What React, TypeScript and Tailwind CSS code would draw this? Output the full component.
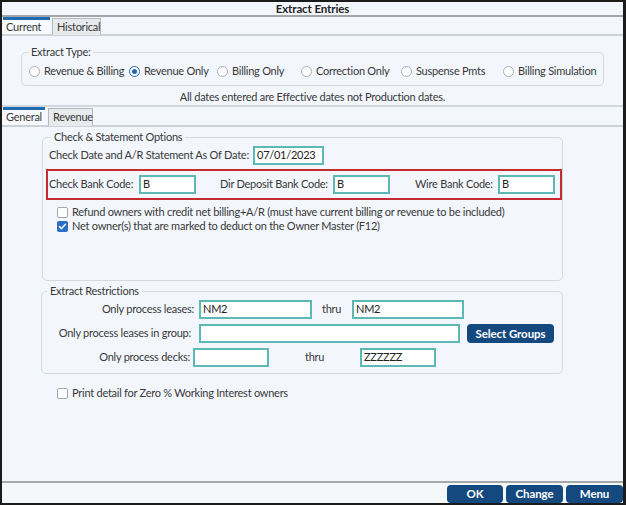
import React from 'react';

const FONT = { fontFamily: 'Lato, "Liberation Sans", sans-serif' };

function Radio({ label, checked, width }: { label: string; checked?: boolean; width?: string }) {
  return (
    <div className={`flex items-center gap-[4px] shrink-0 ${width ?? ''}`}>
      {checked ? (
        <span className="w-[11px] h-[11px] rounded-full border-[1.5px] border-[#2466ad] bg-white flex items-center justify-center">
          <span className="w-[5px] h-[5px] rounded-full bg-[#2466ad]" />
        </span>
      ) : (
        <span className="w-[11px] h-[11px] rounded-full border border-[#a9aeb3] bg-white" />
      )}
      <span>{label}</span>
    </div>
  );
}

function Check({ label, checked }: { label: string; checked?: boolean }) {
  return (
    <div className="flex items-center gap-[4px] h-[14px]">
      {checked ? (
        <span className="w-[11px] h-[11px] rounded-[2px] bg-[#2b6fc1] flex items-center justify-center">
          <svg width="9" height="9" viewBox="0 0 9 9" fill="none">
            <path d="M1.5 4.6l2 2 4-4.4" stroke="#fff" strokeWidth="1.5" strokeLinecap="round" strokeLinejoin="round" />
          </svg>
        </span>
      ) : (
        <span className="w-[11px] h-[11px] rounded-[2px] border border-[#a3a8ad] bg-white" />
      )}
      <span>{label}</span>
    </div>
  );
}

function Field({ value, w }: { value?: string; w: string }) {
  return (
    <div className={`h-[19px] border-2 border-[#5db9b5] bg-white flex items-center pl-[2px] text-[#222] shrink-0 ${w}`}>
      {value}
    </div>
  );
}

function Tab({ label, active, w }: { label: string; active?: boolean; w: string }) {
  return active ? (
    <div className={`h-full border-t-[3px] border-[#1f6cb3] bg-[#f7f9fc] flex items-center px-[3px] ${w}`}>{label}</div>
  ) : (
    <div className={`h-full mt-[1px] border border-b-0 border-[#b4b9be] bg-[#e8ebee] flex items-center px-[4px] ${w}`}>{label}</div>
  );
}

function BlueButton({ label, w }: { label: string; w: string }) {
  return (
    <button className={`h-[18px] rounded-[4px] bg-[#14497f] text-white font-bold text-[11.5px] tracking-[-0.1px] flex items-center justify-center ${w}`}>
      {label}
    </button>
  );
}

export default function App() {
  return (
    <div
      className="w-[626px] h-[505px] border-2 border-r-[3px] border-[#1b1b1b] bg-[#f3f7fd] text-[11px] tracking-[-0.25px] text-[#383838] whitespace-nowrap flex flex-col"
      style={FONT}
    >
      {/* title */}
      <div className="h-[15px] border-b-2 border-[#a3a6a8] flex items-center justify-center font-bold text-[11.5px] tracking-[-0.1px] text-[#222] leading-[13px]">
        Extract Entries
      </div>

      {/* top tabs */}
      <div className="h-[19px] border-b-2 border-[#cdd2d6] flex items-stretch pl-[1px] gap-[2px]">
        <Tab label="Current" active w="w-[47px]" />
        <Tab label="Historical" w="w-[49px]" />
      </div>

      {/* extract type */}
      <fieldset className="mt-[9px] ml-[19px] w-[581px] h-[41px] border border-[#d4dae0] rounded-[5px] px-[7px]">
        <legend className="px-[2px] ml-[0px] leading-[14px]">Extract Type:</legend>
        <div className="flex items-center h-[14px] mt-[5px]">
          <Radio label="Revenue & Billing" width="w-[100px]" />
          <Radio label="Revenue Only" checked width="w-[88px]" />
          <Radio label="Billing Only" width="w-[84px]" />
          <Radio label="Correction Only" width="w-[100px]" />
          <Radio label="Suspense Pmts" width="w-[102px]" />
          <Radio label="Billing Simulation" />
        </div>
      </fieldset>

      <div className="mt-[4px] h-[14px] leading-[14px] text-center">
        All dates entered are Effective dates not Production dates.
      </div>

      {/* sub tabs */}
      <div className="mt-[1px] border-t-2 border-[#d3d8dc] h-[18px] border-b-2 border-b-[#cdd2d6] flex items-stretch pl-[1px] gap-[3px] box-content">
        <Tab label="General" active w="w-[42px]" />
        <Tab label="Revenue" w="w-[45px]" />
      </div>

      {/* check & statement */}
      <fieldset className="mt-[3px] ml-[40px] w-[521px] h-[151px] border border-[#d4dae0] rounded-[5px]">
        <legend className="px-[3px] ml-[8px] leading-[14px]">Check &amp; Statement Options</legend>
        <div className="flex items-center h-[19px] mt-[2px] pl-[6px]">
          <span className="w-[204px] shrink-0">Check Date and A/R Statement As Of Date:</span>
          <Field value="07/01/2023" w="w-[71px]" />
        </div>
        <div className="mt-[4px] ml-[3px] w-[516px] h-[31px] border-2 border-[#c42a2e] flex items-center pl-[1px]">
          <span className="w-[90px] shrink-0">Check Bank Code:</span>
          <Field value="B" w="w-[57px]" />
          <span className="ml-[24px] w-[113px] shrink-0">Dir Deposit Bank Code:</span>
          <Field value="B" w="w-[57px]" />
          <span className="ml-[25px] w-[83px] shrink-0">Wire Bank Code:</span>
          <Field value="B" w="w-[57px]" />
        </div>
        <div className="mt-[5px] ml-[14px] flex flex-col">
          <Check label="Refund owners with credit net billing+A/R (must have current billing or revenue to be included)" />
          <Check label="Net owner(s) that are marked to deduct on the Owner Master (F12)" checked />
        </div>
      </fieldset>

      {/* extract restrictions */}
      <fieldset className="mt-[3px] ml-[39px] w-[522px] h-[90px] border border-[#d4dae0] rounded-[5px]">
        <legend className="px-[3px] ml-[5px] leading-[14px]">Extract Restrictions</legend>
        <div className="flex items-center h-[19px] mt-[2px]">
          <span className="w-[152px] text-right shrink-0">Only process leases:</span>
          <div className="ml-[5px]"><Field value="NM2" w="w-[113px]" /></div>
          <span className="ml-[10px] w-[30px] shrink-0">thru</span>
          <Field value="NM2" w="w-[112px]" />
        </div>
        <div className="flex items-center h-[19px] mt-[5px]">
          <span className="w-[149px] text-right shrink-0">Only process leases in group:</span>
          <div className="ml-[8px]"><Field w="w-[261px]" /></div>
          <div className="ml-[7px]"><BlueButton label="Select Groups" w="w-[87px] h-[19px]" /></div>
        </div>
        <div className="flex items-center h-[19px] mt-[5px]">
          <span className="w-[148px] text-right shrink-0">Only process decks:</span>
          <div className="ml-[3px]"><Field w="w-[76px]" /></div>
          <span className="ml-[36px] w-[55px] shrink-0">thru</span>
          <Field value="ZZZZZZ" w="w-[76px]" />
        </div>
      </fieldset>

      <div className="mt-[12px] ml-[55px]">
        <Check label="Print detail for Zero % Working Interest owners" />
      </div>

      <div className="flex-1" />

      {/* bottom bar */}
      <div className="h-[22px] border-t-2 border-[#a5aaa8] bg-[#f4f8f9] flex items-end justify-end gap-[3px]">
        <BlueButton label="OK" w="w-[56px]" />
        <BlueButton label="Change" w="w-[57px]" />
        <BlueButton label="Menu" w="w-[57px]" />
      </div>
    </div>
  );
}
